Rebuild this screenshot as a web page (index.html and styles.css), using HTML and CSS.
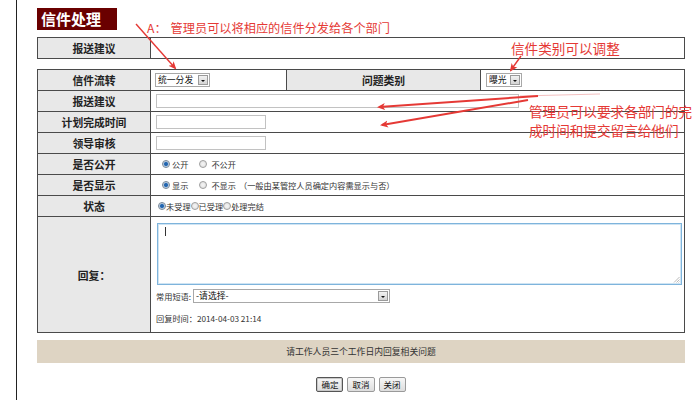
FILE: index.html
```html
<!DOCTYPE html>
<html lang="zh-CN">
<head>
<meta charset="utf-8">
<title>信件处理</title>
<link rel="stylesheet" href="styles.css">
</head>
<body>
<div class="frame">
  <div class="title">信件处理</div>
  <table class="tbl tbl1">
    <colgroup><col class="c-label"><col></colgroup>
    <tr><th>报送建议</th><td></td></tr>
  </table>
  <table class="tbl tbl2">
    <colgroup><col class="c-label"><col class="c-v1"><col class="c-l2"><col></colgroup>
    <tr>
      <th>信件流转</th>
      <td><span class="sel sel-a"><span class="sel-text">统一分发</span><span class="sel-btn"></span></span></td>
      <th>问题类别</th>
      <td><span class="sel sel-b"><span class="sel-text">曝光</span><span class="sel-btn"></span></span></td>
    </tr>
    <tr><th>报送建议</th><td colspan="3"><span class="inp inp-wide"></span></td></tr>
    <tr><th>计划完成时间</th><td colspan="3"><span class="inp inp-short"></span></td></tr>
    <tr><th>领导审核</th><td colspan="3"><span class="inp inp-short"></span></td></tr>
    <tr>
      <th>是否公开</th>
      <td colspan="3"><div class="opts opts-a"><span class="radio on"></span><span class="opt-l">公开</span><span class="radio"></span><span class="opt-r">不公开</span></div></td>
    </tr>
    <tr>
      <th>是否显示</th>
      <td colspan="3"><div class="opts opts-a"><span class="radio on"></span><span class="opt-l">显示</span><span class="radio"></span><span class="opt-r">不显示</span><span class="hint">（一般由某管控人员确定内容需显示与否）</span></div></td>
    </tr>
    <tr>
      <th>状态</th>
      <td colspan="3"><div class="opts opts-b"><span class="radio on"></span><span>未受理</span><span class="radio"></span><span>已受理</span><span class="radio"></span><span>处理完结</span></div></td>
    </tr>
    <tr class="reply-row">
      <th>回复：</th>
      <td colspan="3">
        <div class="ta"><span class="caret"></span><svg class="grip" width="7" height="7" viewBox="0 0 7 7"><path d="M6.5 1 L1 6.5 M6.5 3.5 L3.5 6.5 M6.5 5.5 L5.5 6.5" stroke="#a8a8a8" stroke-width="0.8" fill="none"/></svg></div>
        <div class="phrase"><span class="phrase-l">常用短语:</span><span class="sel sel-c"><span class="sel-text">-请选择-</span><span class="sel-btn"></span></span></div>
        <div class="rtime">回复时间：2014-04-03 21:14</div>
      </td>
    </tr>
  </table>
  <div class="notice">请工作人员三个工作日内回复相关问题</div>
  <div class="btns">
    <button class="btn btn-main">确定</button><button class="btn">取消</button><button class="btn">关闭</button>
  </div>
</div>

<div class="note note-a"><span class="lead">A：</span>管理员可以将相应的信件分发给各个部门</div>
<div class="note note-b">信件类别可以调整</div>
<div class="note note-c">管理员可以要求各部门的完<br>成时间和提交留言给他们</div>

<svg class="arrows" width="698" height="400" viewBox="0 0 698 400">
  <defs>
    <marker id="ah" markerWidth="8" markerHeight="8" refX="6" refY="4" orient="auto" markerUnits="userSpaceOnUse">
      <path d="M0 0.5 L8 4 L0 7.5 L2 4 Z" fill="#e53935"/>
    </marker>
  </defs>
  <line x1="136" y1="24" x2="175" y2="68" stroke="#e53935" stroke-width="1.4" marker-end="url(#ah)"/>
  <line x1="521" y1="56" x2="511" y2="70" stroke="#e53935" stroke-width="1.4" marker-end="url(#ah)"/>
  <line x1="520" y1="96" x2="600" y2="94" stroke="#f0b0b0" stroke-width="0.8"/>
  <line x1="538" y1="96" x2="379" y2="107" stroke="#e53935" stroke-width="2" marker-end="url(#ah)"/>
  <line x1="528" y1="100" x2="382" y2="125" stroke="#e53935" stroke-width="2" marker-end="url(#ah)"/>
</svg>
</body>
</html>
```

FILE: styles.css
```css
html, body {
  margin: 0;
  padding: 0;
  background: #fff;
}
body {
  position: relative;
  width: 698px;
  height: 400px;
  overflow: hidden;
  font-family: "Noto Sans CJK SC", "Liberation Sans", sans-serif;
  color: #222;
}
.frame {
  margin-left: 16px;
  border-left: 1px solid #222;
  padding: 8px 0 0 20px;
  width: 648px;
  height: 392px;
}
.title {
  width: 80px;
  height: 22px;
  box-sizing: border-box;
  padding-left: 4px;
  background: #6a0000;
  color: #fff;
  font-size: 15px;
  font-weight: bold;
  line-height: 22px;
}
.tbl {
  width: 648px;
  border-collapse: collapse;
  table-layout: fixed;
}
.tbl1 { margin-top: 7px; }
.tbl2 { margin-top: 10px; }
.c-label { width: 113px; }
.c-v1 { width: 136px; }
.c-l2 { width: 194px; }
.tbl tr { height: 21px; }
.tbl th, .tbl td {
  border: 1px solid #4a4a4a;
  padding: 0;
}
.tbl th {
  background: #e8e8e8;
  font-size: 10.8px;
  font-weight: bold;
  text-align: center;
  color: #222;
  line-height: 12px;
}
.tbl td {
  background: #fff;
  padding-left: 4px;
  font-size: 8.2px;
  color: #333;
  line-height: 12px;
}
.tbl .reply-row { height: 116px; }
.tbl .reply-row td { vertical-align: top; }

.sel {
  display: inline-flex;
  vertical-align: middle;
  height: 14px;
  box-sizing: border-box;
  border: 1px solid #a8a8a8;
  background: #fff;
}
.sel-a { width: 55px; }
.sel-b { width: 36px; margin-left: 1px; }
.sel-c { width: 197px; }
.sel-text {
  flex: 1;
  padding-left: 2px;
  font-size: 8.8px;
  line-height: 12px;
  color: #111;
  white-space: nowrap;
  overflow: hidden;
}
.sel-btn {
  position: relative;
  width: 10px;
  margin: 1px;
  box-sizing: border-box;
  border: 1px solid #9a9a9a;
  background: linear-gradient(#f2f2f2, #d4d4d4);
}
.sel-btn::after {
  content: "";
  position: absolute;
  left: 2px;
  top: 4px;
  border-left: 2px solid transparent;
  border-right: 2px solid transparent;
  border-top: 2px solid #111;
}

.inp {
  display: inline-block;
  vertical-align: middle;
  height: 14px;
  box-sizing: border-box;
  border: 1px solid #c2c2c2;
  background: #fff;
  margin-left: 1px;
}
.inp-wide { width: 363px; }
.inp-short { width: 110px; }

.opts {
  display: flex;
  align-items: center;
  height: 12px;
}
.opts-a { padding-left: 7px; }
.opts-b { padding-left: 3px; }
.radio {
  width: 8px;
  height: 8px;
  box-sizing: border-box;
  border-radius: 50%;
  border: 1px solid #a0a0a0;
  background: radial-gradient(circle, #f6f6f6 0, #dcdcdc 100%);
  flex: none;
}
.radio.on {
  border-color: #7a8a9a;
  background: radial-gradient(circle, #1f5fa6 0, #2c6db5 1.6px, #a9c3df 2.4px, #e6e6e6 3.2px);
}
.opt-l { margin-left: 2px; margin-right: 11px; }
.opt-r { margin-left: 4px; }
.hint { margin-left: 3px; }

.ta {
  position: relative;
  width: 525px;
  height: 62px;
  box-sizing: border-box;
  margin: 6px 0 0 2px;
  border: 1px solid #7eb4dc;
  box-shadow: inset 0 0 0 1px #cfe4f3;
  background: #fff;
}
.caret {
  position: absolute;
  left: 7px;
  top: 3px;
  width: 1px;
  height: 9px;
  background: #333;
}
.grip {
  position: absolute;
  right: 1px;
  bottom: 1px;
}
.phrase {
  display: flex;
  align-items: center;
  margin: 3px 0 0 1px;
  height: 15px;
}
.phrase-l { margin-right: 2px; }
.rtime {
  margin: 9px 0 0 1px;
}

.notice {
  margin-top: 7px;
  height: 23px;
  background: #ded4c3;
  text-align: center;
  font-size: 8.8px;
  line-height: 23px;
  color: #333;
}
.btns {
  margin-top: 14px;
  text-align: center;
  font-size: 0;
}
.btn {
  height: 15px;
  padding: 0 4px;
  margin: 0 2px;
  font-family: "Noto Sans CJK SC", sans-serif;
  font-size: 8.5px;
  line-height: 13px;
  color: #111;
  border: 1px solid #9a9a9a;
  border-radius: 2px;
  background: linear-gradient(#f7f7f7, #dddddd);
  vertical-align: top;
}
.btn-main {
  border-color: #555;
  box-shadow: inset 0 0 0 1px #c8c8c8;
}

.note {
  position: absolute;
  color: #e53935;
  white-space: nowrap;
  line-height: 1;
}
.note-a {
  left: 147px;
  top: 22px;
  font-size: 12.2px;
}
.note-a .lead { margin-right: 4px; }
.note-b {
  left: 511px;
  top: 42px;
  font-size: 13.6px;
}
.note-c {
  left: 529px;
  top: 102px;
  font-size: 13.6px;
  line-height: 18.5px;
}
.arrows {
  position: absolute;
  left: 0;
  top: 0;
  pointer-events: none;
}
```
